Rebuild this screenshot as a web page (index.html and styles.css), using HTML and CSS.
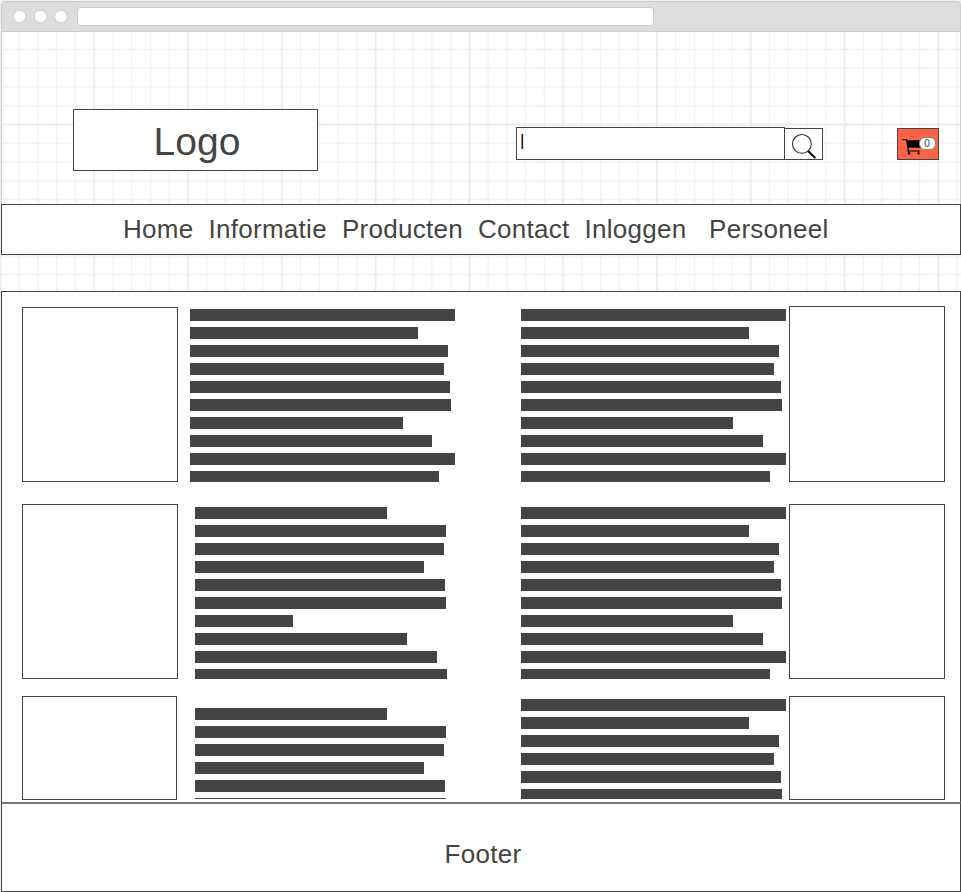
FILE: index.html
```html
<!DOCTYPE html>
<html lang="nl">
<head>
<meta charset="utf-8">
<title>Webshop</title>
<link rel="stylesheet" href="styles.css">
</head>
<body>
<div class="window">
  <div class="chrome">
    <svg class="dots" width="60" height="16" viewBox="0 0 60 16">
      <g fill="#fff" stroke="#ccc"><circle cx="7.6" cy="8.5" r="6.3"/><circle cx="28.5" cy="8.5" r="6.3"/><circle cx="49" cy="8.5" r="6.4"/></g>
    </svg>
    <div class="address"></div>
  </div>
  <div class="page">
    <svg class="grid" width="960" height="260">
      <defs>
        <pattern id="minor" x="8.7" y="8.1" width="18.76" height="18.76" patternUnits="userSpaceOnUse"><path d="M0 9.38H18.76M9.38 0V18.76" stroke="#f1f1f1" stroke-width="1.3" fill="none"/></pattern>
        <pattern id="major" x="46.4" y="45.6" width="93.8" height="93.8" patternUnits="userSpaceOnUse"><path d="M0 46.9H93.8M46.9 0V93.8" stroke="#e6e6e6" stroke-width="1" fill="none"/></pattern>
      </defs>
      <rect width="960" height="260" fill="url(#minor)"/>
      <rect width="960" height="260" fill="url(#major)"/>
    </svg>
    <header class="header">
      <div class="logo">Logo</div>
      <div class="search">
        <div class="field">|</div>
        <div class="search-button">
          <svg width="37" height="30" viewBox="0 0 37 30"><circle cx="16.9" cy="14.9" r="9.4" fill="none" stroke="#333" stroke-width="1.1"/><path d="M22.8 21.7l7.5 7.4" stroke="#111" stroke-width="2.1" fill="none"/></svg>
        </div>
      </div>
      <div class="cart">
        <svg width="22" height="20" viewBox="0 0 22 20"><path d="M.6 1.6h4l1.7 11M4.7 13h13.6M7 13v2.4M16.5 13v2.4" fill="none" stroke="#000" stroke-width="1.1"/><path d="M4.7 2.2H20v7.6H5.8z"/><circle cx="7" cy="15.4" r="1.2"/><circle cx="16.6" cy="15.4" r="1.2"/></svg>
        <span class="badge">0</span>
      </div>
    </header>
    <nav class="nav"><a>Home</a><a>Informatie</a><a>Producten</a><a>Contact</a><a>Inloggen</a><a class="staff">Personeel</a></nav>
    <main class="content" id="content"></main>
    <footer class="footer">Footer</footer>
  </div>
</div>
<script src="script.js"></script>
</body>
</html>
```
FILE: styles.css
```css
* { box-sizing: border-box; }
body { margin: 0; width: 961px; height: 892px; overflow: hidden; background: #fff; color: #444; font-family: "Liberation Sans", Arial, sans-serif; }
.window { height: 892px; padding: 1px 0 0 1px; background: #eee; }
.chrome { display: flex; align-items: flex-start; height: 31px; padding: 6px 0 0 10px; background: #ddd; border: 1px solid #ccc; border-radius: 4px 4px 0 0; }
.dots { flex: none; }
.address { width: 577px; height: 19px; margin: -1px 0 0 5px; background: #fff; border: 1px solid #ccc; border-radius: 3px; }
.page { position: relative; display: flex; flex-direction: column; height: 860px; background: #fff; }
.grid { position: absolute; top: 0; left: 0; }
.header { position: relative; display: flex; align-items: flex-start; height: 172px; padding-left: 71px; border: solid #ccc; border-width: 0 1px; }
.logo { width: 245px; height: 62px; margin-top: 77px; border: 1px solid #444; background: #fff; text-align: center; font-size: 39px; line-height: 64px; letter-spacing: .1px; padding-left: 3px; }
.search { display: flex; align-items: flex-end; margin: 95px 0 0 198px; }
.field { width: 269px; height: 33px; padding-left: 3px; border: 1px solid #444; background: #fff; color: #000; font-size: 17px; line-height: 26px; }
.search-button { width: 39px; height: 32px; margin-left: -1px; border: 1px solid #444; background: #fff; }
.search-button svg, .cart svg { display: block; }
.cart { display: flex; width: 42px; height: 32px; margin: 96px 0 0 74px; padding: 9px 0 0 4px; border: 1px solid #444; background: #ff6347; }
.cart svg { flex: none; }
.badge { position: relative; flex: none; width: 17px; height: 13px; margin: -1px 0 0 -5px; padding-right: 1px; border: 1px solid #888; border-radius: 6px; background: #fff; font-size: 10px; line-height: 12px; text-align: center; }
.nav { position: relative; display: flex; flex: none; height: 51px; padding-left: 121px; gap: 15px; border: 1px solid #444; background: #fff; font-size: 26px; line-height: 49px; letter-spacing: .28px; }
.staff { margin-left: 7.5px; }
.content { position: relative; display: grid; grid-template-columns: 168px 331px 268px 156px; grid-template-rows: 197px 192px 104px; flex: none; height: 511px; margin-top: 36px; padding: 14px 0 0 20px; border: solid #444; border-width: 1px 1px 0; background: #fff; }
.box { border: 1px solid #444; }
.lines { overflow: hidden; }
.bar { height: 12px; margin-bottom: 6px; background: #444; }
.footer { flex: none; height: 90px; border: 1px solid #444; border-top: 2px solid #777; text-align: center; font-size: 26px; line-height: 101px; letter-spacing: .3px; padding-left: 4px; }
```
FILE: script.js
```js
const LONG = [265, 228, 258, 253, 260, 261, 212, 242, 265, 249];
const LEFT = [265, 228, 258, 254, 260, 261, 213, 242, 265, 249];
const SHORT = [192, 251, 249, 229, 250, 251, 98, 212, 242, 252];
// Items in reading order; offset, size and text block spacing in pixels
const items = [
  { box: [1, 156, 175] }, { lines: LEFT, x: 0, top: 3, height: 173 },
  { lines: LONG, x: 0, top: 3, height: 173 }, { box: [0, 156, 176] },
  { box: [1, 156, 175] }, { lines: SHORT, x: 5, top: 4, height: 172 },
  { lines: LONG, x: 0, top: 4, height: 172 }, { box: [1, 156, 175] },
  { box: [1, 155, 104] }, { lines: SHORT, x: 5, top: 13, height: 91 },
  { lines: LONG, x: 0, top: 4, height: 100 }, { box: [1, 156, 104] }
];
const content = document.getElementById("content");
for (const item of items) {
  const el = document.createElement("div");
  if (item.box) {
    const [top, width, height] = item.box;
    el.className = "box";
    el.style.cssText = `margin-top:${top}px;width:${width}px;height:${height}px`;
  } else {
    el.className = "lines";
    el.style.cssText = `margin:${item.top}px 0 0 ${item.x}px;height:${item.height}px`;
    for (const width of item.lines) {
      const bar = document.createElement("div");
      bar.className = "bar";
      bar.style.width = width + "px";
      el.append(bar);
    }
  }
  content.append(el);
}
```
